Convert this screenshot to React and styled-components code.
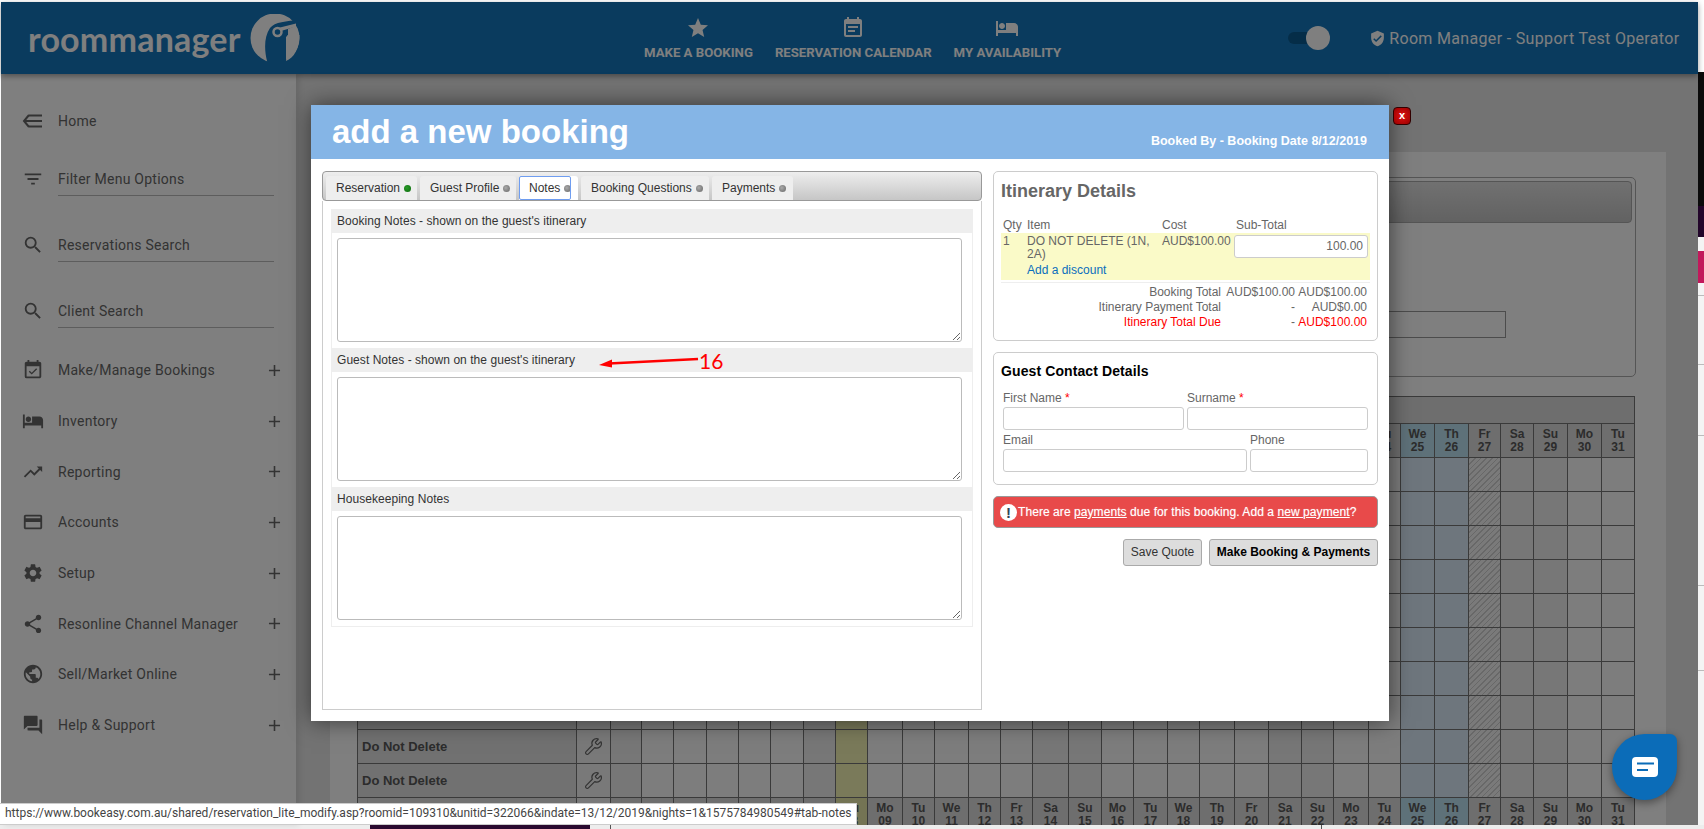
import styled, { createGlobalStyle } from "styled-components";
import { Wrench } from "lucide-react";
import {
  MdStar, MdEventNote, MdHotel, MdVerifiedUser, MdFilterList, MdSearch, MdEventAvailable,
  MdTrendingUp, MdCreditCard, MdSettings, MdShare, MdPublic, MdQuestionAnswer, MdAdd,
} from "react-icons/md";

const GlobalStyle = createGlobalStyle`
  html, body { margin: 0; padding: 0; overflow: hidden; background: #fff; }
  * { box-sizing: border-box; }
  body { font-family: "Liberation Sans", Arial, sans-serif; font-size: 12px; }
`;

const DAY_WIDTHS = [31,32,33,32,32,33,32,32,35,32,34,32,32,36,33,32,34,32,35,34,33,32,35,32,34,34,32,33,34,34,33];
const DAY_NAMES = ["Su","Mo","Tu","We","Th","Fr","Sa"];
const COLS = `219px 34px ${DAY_WIDTHS.map(w => w + "px").join(" ")}`;
const DAYS = DAY_WIDTHS.map((_, i) => ({
  name: DAY_NAMES[i % 7],
  num: String(i + 1).padStart(2, "0"),
  kind: i === 7 ? "today" : i === 24 || i === 25 ? "blue" : i === 26 ? "hatch" : i % 7 === 6 || i % 7 === 0 ? "weekend" : "plain",
}));

const Root = styled.div`
  position: relative;
  width: 1704px;
  height: 829px;
  overflow: hidden;
  display: flex;
  flex-direction: column;
  background: #ededed;
`;
const Top = styled.div`
  display: flex;
  height: 825px;
`;
const Frame = styled.div`
  width: 1698px;
  height: 825px;
  padding: 2px 0 0 1px;
  background: #fff;
`;
const Shell = styled.div`
  position: relative;
  height: 823px;
  display: flex;
  flex-direction: column;
  background: #e6e6e6;
`;
const Dim = styled.div`
  position: absolute;
  inset: 0;
  z-index: 2;
  background: rgba(0, 0, 0, .5);
`;
const Header = styled.header`
  position: relative;
  z-index: 1;
  height: 72px;
  flex: none;
  background: #1476bc;
  box-shadow: 0 2px 6px rgba(0, 0, 0, .4);
  display: flex;
  align-items: center;
  color: #fff;
`;
const Logo = styled.div`
  width: 560px;
  padding-left: 27px;
  display: flex;
  align-items: center;
  gap: 9px;
  font: 700 34px Lato, sans-serif;
  letter-spacing: .2px;
  color: #fff;
`;
const Nav = styled.nav`
  display: flex;
  margin-left: 83px;
  gap: 22px;
`;
const NavItem = styled.div`
  display: flex;
  flex-direction: column;
  align-items: center;
  gap: 5px;
  font: 700 13.2px Roboto, sans-serif;
  svg { font-size: 24px; }
`;
const Toggle = styled.div`
  position: relative;
  width: 42px;
  height: 12px;
  margin-left: 227px;
  border-radius: 6px 0 0 6px;
  background: linear-gradient(90deg, #0a5a90 70%, transparent 70%);
  &::after {
    content: "";
    position: absolute;
    right: 0;
    top: -6px;
    width: 24px;
    height: 24px;
    border-radius: 50%;
    background: #fff;
  }
`;
const Operator = styled.div`
  margin-left: 39px;
  display: flex;
  align-items: center;
  gap: 3px;
  font: 400 16px Roboto, sans-serif;
  letter-spacing: .33px;
  white-space: nowrap;
  svg { font-size: 17px; }
`;
const Body = styled.div`
  flex: 1;
  display: flex;
  min-height: 0;
`;
const Sidebar = styled.aside`
  width: 295px;
  flex: none;
  padding-top: 22px;
  background: #fff;
  box-shadow: 3px 0 6px rgba(0, 0, 0, .1);
  color: #666;
  font: 400 14px Roboto, sans-serif;
  letter-spacing: .25px;
`;
const Item = styled.div`
  height: ${p => p.$h || 50.7}px;
  padding: 0 12px 0 21px;
  display: flex;
  align-items: center;
  svg { flex: none; }
`;
const IconBox = styled.div`
  width: 36px;
  display: flex;
  font-size: 22px;
`;
const Plus = styled.div`
  margin-left: auto;
  display: flex;
  font-size: 19px;
`;
const SearchGroup = styled.div`
  padding: 16px 0 17px;
  display: flex;
  flex-direction: column;
  gap: 32px;
`;
const SearchItem = styled.div`
  height: 34px;
  padding-left: 21px;
  display: flex;
  align-items: center;
`;
const SearchLabel = styled.div`
  width: 216px;
  height: 34px;
  line-height: 34px;
  border-bottom: 1px solid #bbb;
`;
const Main = styled.main`
  flex: 1;
  padding: 78px 32px 0 34px;
  min-width: 0;
`;
const Panel = styled.div`
  height: 673px;
  overflow: hidden;
  padding: 25px 30px 0 27px;
  background: #fff;
`;
const Fieldset = styled.div`
  width: 1279px;
  height: 200px;
  padding: 3px;
  border: 1px solid #aaa;
  border-radius: 5px;
`;
const FieldBar = styled.div`
  height: 42px;
  border: 1px solid #aaa;
  border-radius: 4px;
  background: linear-gradient(#e2e2e2, #c4c4c4);
`;
const FieldInput = styled.div`
  width: 500px;
  height: 27px;
  margin: 88px 126px 0 auto;
  border: 1px solid #999;
`;
const Calendar = styled.div`
  width: 1278px;
  margin-top: 19px;
  border-left: 1px solid #747474;
  color: #585858;
`;
const Band = styled.div`
  height: 28px;
  background: #dcdcdc;
  border: 1px solid #747474;
  border-left: 0;
`;
const CalRow = styled.div`
  display: grid;
  grid-template-columns: ${COLS};
  height: ${p => p.$h || 34}px;
  border-bottom: 1px solid #747474;
`;
const NameCell = styled.div`
  display: flex;
  align-items: center;
  padding-left: 4px;
  font-size: 13px;
  font-weight: 700;
  background: #e2e2e2;
  border-right: 1px solid #747474;
`;
const ToolCell = styled.div`
  display: flex;
  align-items: center;
  justify-content: center;
  background: #f2f2f2;
  border-right: 1px solid #747474;
  color: #666;
`;
const dayBg = {
  plain: "#fbfbfb",
  weekend: "#eeeeee",
  today: "#f5f5b4",
  blue: "#dcecfa",
  hatch: "repeating-linear-gradient(135deg, #d0d0d0 0 1px, #f4f4f4 1px 4px)",
};
const DayCell = styled.div`
  background: ${p => dayBg[p.$kind]};
  border-right: 1px solid #747474;
`;
const headBg = { plain: "#dcdcdc", weekend: "#dcdcdc", today: "#e8e8a8", blue: "#bce2f2", hatch: "#dcdcdc" };
const DayHead = styled.div`
  padding-top: 4px;
  background: ${p => headBg[p.$kind]};
  border-right: 1px solid #747474;
  font-weight: 700;
  line-height: 13px;
  text-align: center;
`;
const Strip = styled.div`
  flex: 1;
  display: flex;
  flex-direction: column;
  background: #f4f4f4;
`;
const StripPart = styled.div`
  height: ${p => p.$h}px;
  background: ${p => p.$bg || "transparent"};
  border-bottom: ${p => (p.$line ? "1px solid #bbb" : "0")};
`;
const Bottom = styled.div`
  height: 4px;
  display: flex;
`;
const BottomDark = styled.div`
  width: 220px;
  margin-left: 370px;
  background: #2a0a30;
`;
const BottomTick = styled.div`
  width: 1px;
  margin-left: ${p => p.$ml}px;
  background: #555;
`;

const Modal = styled.div`
  position: absolute;
  z-index: 3;
  left: 311px;
  top: 105px;
  width: 1078px;
  height: 616px;
  background: #fff;
  box-shadow: 0 0 22px rgba(0, 0, 0, .55);
`;
const ModalHead = styled.div`
  height: 54px;
  padding: 0 22px 0 21px;
  display: flex;
  justify-content: space-between;
  background: #85b5e6;
  color: #fff;
  font-weight: 700;
`;
const Title = styled.h1`
  margin: 0;
  font-size: 33px;
  line-height: 54px;
`;
const Booked = styled.div`
  align-self: flex-end;
  margin-bottom: 11px;
  font-size: 12.5px;
`;
const ModalBody = styled.div`
  padding: 12px 11px;
  display: flex;
  gap: 11px;
`;
const LeftCol = styled.div`
  width: 660px;
  flex: none;
`;
const TabBar = styled.div`
  height: 30px;
  padding: 4px 0 0 3px;
  display: flex;
  align-items: stretch;
  gap: 3px;
  border: 1px solid #999;
  border-radius: 4px;
  background: linear-gradient(#eee, #c6c6c6);
`;
const Tab = styled.div`
  position: relative;
  width: ${p => p.$w}px;
  padding-left: 10px;
  display: flex;
  align-items: center;
  gap: 4px;
  color: #333;
  background: ${p => (p.$active ? "#fff" : "#eeeeee")};
  border-radius: 3px 3px 0 0;
  &::before {
    content: ${p => (p.$active ? '""' : "none")};
    position: absolute;
    inset: 0 7px 0 0;
    border: 1px solid #6f9df0;
    border-radius: 2px;
  }
`;
const Dot = styled.span`
  width: 7px;
  height: 7px;
  flex: none;
  border-radius: 50%;
  background: radial-gradient(circle at 40% 40%, ${p => (p.$on ? "#2a9a2a, #0a6a0a" : "#aaa, #666")});
`;
const TabPanel = styled.div`
  height: 509px;
  padding: 8px 8px 0;
  border: 1px solid #ccc;
  border-top: 0;
`;
const Notes = styled.div`
  border: 1px solid #eee;
  border-top: 0;
`;
const NoteHead = styled.div`
  height: 24px;
  line-height: 24px;
  padding-left: 5px;
  background: #eee;
  color: #333;
  letter-spacing: .05px;
`;
const NoteWrap = styled.div`
  padding: 5px 0 6px 5px;
  display: flex;
`;
const NoteBox = styled.textarea`
  width: 625px;
  height: 104px;
  display: block;
  border: 1px solid #bbb;
  border-radius: 3px;
  outline: 0;
  background: #fff;
`;
const RightCol = styled.div`
  width: 385px;
  flex: none;
`;
const Card = styled.div`
  height: ${p => p.$h}px;
  padding: 0 7px;
  border: 1px solid #ccc;
  border-radius: 5px;
  color: #666;
  & + & { margin-top: 11px; }
`;
const CardTitle = styled.h2`
  margin: 8px 0 16px;
  font-size: 18px;
  line-height: 22px;
`;
const ItemGrid = styled.div`
  display: grid;
  grid-template-columns: 24px 135px 74px 136px;
  & > div { padding-left: 2px; }
`;
const HeadCell = styled.div`
  height: 15px;
  line-height: 14px;
`;
const LineRow = styled.div`
  grid-column: 1 / -1;
  display: grid;
  grid-template-columns: inherit;
  height: 47px;
  padding: 2px 0 0 !important;
  background: #fafac8;
  line-height: 12.5px;
  & > div { padding-left: 2px; }
`;
const Discount = styled.a`
  display: block;
  margin-top: 4px;
  color: #0a6ebd;
`;
const SubTotal = styled.div`
  width: 134px;
  height: 23px;
  padding: 0 4px 0 0 !important;
  text-align: right;
  line-height: 21px;
  background: #fff;
  border: 1px solid #ccc;
  border-radius: 3px;
`;
const Totals = styled.div`
  margin-top: 2px;
  padding-top: 2px;
  border-top: 1px solid #eee;
`;
const TotalRow = styled.div`
  display: grid;
  grid-template-columns: 220px 74px 72px;
  height: 15px;
  line-height: 15px;
  text-align: right;
  color: ${p => (p.$due ? "#f00" : "#666")};
`;
const TotalDash = styled.span`
  color: #666;
`;
const GuestTitle = styled.h3`
  margin: 10px 0 11px;
  font-size: 14px;
  line-height: 17px;
  letter-spacing: .1px;
  color: #000;
`;
const FormGrid = styled.div`
  padding-left: 2px;
  display: grid;
  grid-template-columns: ${p => p.$cols};
  gap: 3px;
  & + & { margin-top: 3px; }
`;
const FieldLabel = styled.label`
  display: block;
  height: 15px;
  line-height: 14px;
  b { color: #f00; font-weight: 400; }
`;
const TextInput = styled.div`
  height: 23px;
  border: 1px solid #ccc;
  border-radius: 3px;
  margin-top: 1px;
`;
const Alert = styled.div`
  height: 32px;
  margin-top: 11px;
  padding-left: 6px;
  display: flex;
  align-items: center;
  gap: 1px;
  background: #e84a4a;
  border: 1px solid #999;
  border-radius: 5px;
  color: #fff;
  letter-spacing: .07px;
  text-shadow: 0 0 1px rgba(255, 255, 255, .5);
  a { text-decoration: underline; }
`;
const AlertIcon = styled.span`
  width: 17px;
  height: 17px;
  flex: none;
  border-radius: 50%;
  background: #fff;
  color: #345;
  font-size: 15px;
  font-weight: 700;
  line-height: 17px;
  text-align: center;
`;
const Actions = styled.div`
  margin-top: 11px;
  display: flex;
  justify-content: flex-end;
  gap: 7px;
`;
const Button = styled.div`
  width: ${p => p.$w}px;
  height: 27px;
  line-height: 25px;
  text-align: center;
  background: #ddd;
  border: 1px solid #aaa;
  border-radius: 3px;
  color: ${p => (p.$main ? "#000" : "#333")};
  font-weight: ${p => (p.$main ? 700 : 400)};
`;
const Close = styled.div`
  position: absolute;
  z-index: 3;
  left: 1393px;
  top: 107px;
  width: 18px;
  height: 18px;
  border: 1px solid #300;
  border-radius: 4px;
  background: radial-gradient(circle, #e01010, #900);
  color: #fff;
  font-size: 11px;
  font-weight: 700;
  line-height: 15px;
  text-align: center;
`;
const Annotation = styled.div`
  position: absolute;
  left: 288px;
  top: 241px;
  width: 125px;
  height: 28px;
  display: flex;
  align-items: center;
  svg { flex: none; }
`;
const AnnotationText = styled.span`
  color: #f00;
  font: 400 21px Lato, sans-serif;
`;
const StatusBar = styled.div`
  position: absolute;
  z-index: 3;
  left: 0;
  top: 803px;
  width: 857px;
  height: 22px;
  padding-left: 5px;
  background: #fff;
  border: 1px solid #ccc;
  border-left: 0;
  color: #444;
  font: 400 12px/19px Roboto, sans-serif;
  white-space: nowrap;
`;
const Chat = styled.div`
  position: absolute;
  z-index: 3;
  left: 1612px;
  top: 734px;
  width: 65px;
  height: 66px;
  display: flex;
  align-items: center;
  justify-content: center;
  background: #0b6cb8;
  border-radius: 50% 7px 50% 50%;
  box-shadow: 0 3px 8px rgba(0, 0, 0, .4);
`;

const MENU = [
  { icon: <MdEventAvailable />, label: "Make/Manage Bookings" },
  { icon: <MdHotel />, label: "Inventory" },
  { icon: <MdTrendingUp />, label: "Reporting" },
  { icon: <MdCreditCard />, label: "Accounts" },
  { icon: <MdSettings />, label: "Setup" },
  { icon: <MdShare />, label: "Resonline Channel Manager" },
  { icon: <MdPublic />, label: "Sell/Market Online" },
  { icon: <MdQuestionAnswer />, label: "Help & Support" },
];
const SEARCHES = [
  { icon: <MdFilterList />, label: "Filter Menu Options" },
  { icon: <MdSearch />, label: "Reservations Search" },
  { icon: <MdSearch />, label: "Client Search" },
];
const TABS = [
  { label: "Reservation", on: true, w: 91 },
  { label: "Guest Profile", w: 96 },
  { label: "Notes", active: true, w: 59 },
  { label: "Booking Questions", w: 128 },
  { label: "Payments", w: 81 },
];
const NOTES = ["Booking Notes - shown on the guest's itinerary", "Guest Notes - shown on the guest's itinerary", "Housekeeping Notes"];
const STRIP = [
  { h: 72, bg: "#fff" }, { h: 134, bg: "#0a0a0a" }, { h: 31, bg: "#22052a" }, { h: 14 }, { h: 32, bg: "#c2185b" },
  { h: 13, line: true }, { h: 69, line: true }, { h: 71, line: true }, { h: 150, line: true }, { h: 85, line: true },
];

const LogoMark = () => (
  <svg width="50" height="48" viewBox="0 0 50 48">
    <circle cx="25" cy="24" r="24.5" fill="#fff" />
    <path d="M17.500 49C14 36 14 23 20 14C25 8 36 7 50 6V10L38 15V21L36 23V49Z" fill="#1476bc" />
    <path d="M37.500 21C38 34 37 41 36 47C44 44 49.500 34 49.500 21Z" fill="#fff" />
    <circle cx="27.500" cy="18" r="4" fill="#1476bc" stroke="#fff" strokeWidth="2.500" />
    <path d="M28 14L46 9.500V12.500L31 17Z" fill="#fff" />
  </svg>
);

const HomeIcon = () => (
  <svg width="22" height="22" viewBox="0 0 22 22" fill="none" stroke="currentColor" strokeWidth="2">
    <path d="M7 5L2 11L7 17" />
    <path d="M2 11H20M7 5.500H20M7 16.500H20" />
  </svg>
);

const Day = ({ d }) => <DayHead $kind={d.kind}>{d.name}<br />{d.num}</DayHead>;

const App = () => (
  <Root>
    <GlobalStyle />
    <Top>
      <Frame>
        <Shell>
          <Header>
            <Logo>roommanager<LogoMark /></Logo>
            <Nav>
              <NavItem><MdStar />MAKE A BOOKING</NavItem>
              <NavItem><MdEventNote />RESERVATION CALENDAR</NavItem>
              <NavItem><MdHotel />MY AVAILABILITY</NavItem>
            </Nav>
            <Toggle />
            <Operator><MdVerifiedUser />Room Manager - Support Test Operator</Operator>
          </Header>
          <Body>
            <Sidebar>
              <Item $h={50}><IconBox><HomeIcon /></IconBox>Home</Item>
              <SearchGroup>
                {SEARCHES.map(s => (
                  <SearchItem key={s.label}>
                    <IconBox>{s.icon}</IconBox>
                    <SearchLabel>{s.label}</SearchLabel>
                  </SearchItem>
                ))}
              </SearchGroup>
              {MENU.map(m => (
                <Item key={m.label}>
                  <IconBox>{m.icon}</IconBox>
                  {m.label}
                  <Plus><MdAdd /></Plus>
                </Item>
              ))}
            </Sidebar>
            <Main>
              <Panel>
                <Fieldset>
                  <FieldBar />
                  <FieldInput />
                </Fieldset>
                <Calendar>
                  <Band />
                  <CalRow $h={34}>
                    <NameCell />
                    <ToolCell />
                    {DAYS.map(d => <Day key={d.num} d={d} />)}
                  </CalRow>
                  {Array.from({ length: 10 }, (_, r) => (
                    <CalRow key={r}>
                      <NameCell>Do Not Delete</NameCell>
                      <ToolCell><Wrench size={19} strokeWidth={1.5} /></ToolCell>
                      {DAYS.map(d => <DayCell key={d.num} $kind={d.kind} />)}
                    </CalRow>
                  ))}
                  <CalRow $h={30}>
                    <NameCell />
                    <ToolCell />
                    {DAYS.map(d => <Day key={d.num} d={d} />)}
                  </CalRow>
                </Calendar>
              </Panel>
            </Main>
          </Body>
          <Dim />
        </Shell>
      </Frame>
      <Strip>
        {STRIP.map((s, i) => <StripPart key={i} $h={s.h} $bg={s.bg} $line={s.line} />)}
      </Strip>
    </Top>
    <Bottom>
      <BottomDark />
      <BottomTick $ml={20} />
      <BottomTick $ml={710} />
    </Bottom>

    <Modal>
      <ModalHead>
        <Title>add a new booking</Title>
        <Booked>Booked By - Booking Date 8/12/2019</Booked>
      </ModalHead>
      <ModalBody>
        <LeftCol>
          <TabBar>
            {TABS.map(t => (
              <Tab key={t.label} $active={t.active} $w={t.w}>
                {t.label}<Dot $on={t.on} />
              </Tab>
            ))}
          </TabBar>
          <TabPanel>
            <Notes>
              {NOTES.map(n => (
                <div key={n}>
                  <NoteHead>{n}</NoteHead>
                  <NoteWrap><NoteBox readOnly /></NoteWrap>
                </div>
              ))}
            </Notes>
          </TabPanel>
        </LeftCol>
        <RightCol>
          <Card $h={170}>
            <CardTitle>Itinerary Details</CardTitle>
            <ItemGrid>
              <HeadCell>Qty</HeadCell>
              <HeadCell>Item</HeadCell>
              <HeadCell>Cost</HeadCell>
              <HeadCell>Sub-Total</HeadCell>
              <LineRow>
                <div>1</div>
                <div>DO NOT DELETE (1N, 2A)<Discount>Add a discount</Discount></div>
                <div>AUD$100.00</div>
                <SubTotal>100.00</SubTotal>
              </LineRow>
            </ItemGrid>
            <Totals>
              <TotalRow><span>Booking Total</span><span>AUD$100.00</span><span>AUD$100.00</span></TotalRow>
              <TotalRow><span>Itinerary Payment Total</span><span>-</span><span>AUD$0.00</span></TotalRow>
              <TotalRow $due><span>Itinerary Total Due</span><TotalDash>-</TotalDash><span>AUD$100.00</span></TotalRow>
            </Totals>
          </Card>
          <Card $h={133}>
            <GuestTitle>Guest Contact Details</GuestTitle>
            <FormGrid $cols="181px 181px">
              <div><FieldLabel>First Name <b>*</b></FieldLabel><TextInput /></div>
              <div><FieldLabel>Surname <b>*</b></FieldLabel><TextInput /></div>
            </FormGrid>
            <FormGrid $cols="244px 118px">
              <div><FieldLabel>Email</FieldLabel><TextInput /></div>
              <div><FieldLabel>Phone</FieldLabel><TextInput /></div>
            </FormGrid>
          </Card>
          <Alert>
            <AlertIcon>!</AlertIcon>
            <span>There are <a>payments</a> due for this booking. Add a <a>new payment</a>?</span>
          </Alert>
          <Actions>
            <Button $w={79}>Save Quote</Button>
            <Button $w={169} $main>Make Booking &amp; Payments</Button>
          </Actions>
        </RightCol>
      </ModalBody>
      <Annotation>
        <svg width="100" height="18" viewBox="0 0 100 18">
          <path d="M99 8L10 12.500" stroke="#f00" strokeWidth="2.500" />
          <path d="M0 14L13 8.500L13 16.500Z" fill="#f00" />
        </svg>
        <AnnotationText>16</AnnotationText>
      </Annotation>
    </Modal>
    <Close>x</Close>
    <Chat>
      <svg width="26" height="20" viewBox="0 0 26 20">
        <rect width="26" height="20" rx="4" fill="#fff" />
        <path d="M5 6.500H22M5 13H16" stroke="#0b6cb8" strokeWidth="2" />
      </svg>
    </Chat>
    <StatusBar>https://www.bookeasy.com.au/shared/reservation_lite_modify.asp?roomid=109310&amp;unitid=322066&amp;indate=13/12/2019&amp;nights=1&amp;1575784980549#tab-notes</StatusBar>
  </Root>
);

export default App;
